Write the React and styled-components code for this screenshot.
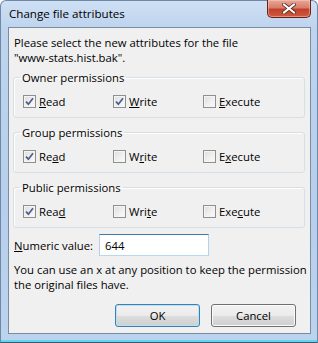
import React from "react";
import styled, { createGlobalStyle } from "styled-components";

const GlobalStyle = createGlobalStyle`
  body {
    margin: 0;
    background: #fff;
  }
  * {
    box-sizing: border-box;
  }
`;

const Window = styled.div`
  width: 318px;
  height: 343px;
  display: flex;
  flex-direction: column;
  padding: 0 6px 8px 7px;
  border: 1px solid #6f88a6;
  border-bottom-color: #3a5670;
  border-radius: 6px 6px 0 0;
  background: linear-gradient(to bottom, #cfe0f4 0px, #bed4ee 26px, #b7cfec 60%, #bcd3ee 100%);
  box-shadow: inset 0 -2px 0 #5fd6f4;
  font-family: "Open Sans", "Liberation Sans", sans-serif;
  font-size: 11.3px;
  color: #000;
`;

const TitleBar = styled.div`
  height: 26px;
  display: flex;
  align-items: flex-start;
  flex-shrink: 0;
`;

const Title = styled.div`
  line-height: 26px;
  padding-left: 1px;
  font-size: 11.6px;
`;

const CloseButton = styled.div`
  margin-left: auto;
  margin-top: -1px;
  width: 44px;
  height: 18px;
  display: flex;
  align-items: center;
  justify-content: center;
  border: 1px solid #6c2118;
  border-top: none;
  border-radius: 0 0 5px 5px;
  background: linear-gradient(to bottom, #e8a898 0%, #d87e6a 45%, #c1412b 55%, #cf5a3f 100%);
  box-shadow: inset 0 0 0 1px rgba(255, 210, 200, 0.45);
`;

const Client = styled.div`
  flex: 1;
  min-height: 0;
  display: flex;
  flex-direction: column;
  padding: 7px 5px 5px 4px;
  background: #f0f0f0;
  border: 1px solid #7b8ba0;
  line-height: 15px;
`;

const Text = styled.div`
  padding-left: 1px;
  white-space: nowrap;
  margin-top: ${(p) => p.$gap || 0}px;
`;

const Group = styled.fieldset`
  margin: ${(p) => p.$gap}px 0 0 0;
  padding: 9px 6px 8px 9px;
  border: 1px solid #d5dfe5;
  border-radius: 3px;
  min-inline-size: 0;
  box-shadow: inset 1px 1px 0 #fff;
`;

const Legend = styled.legend`
  padding: 0 2px;
  margin-left: -3px;
  line-height: 15px;
`;

const Row = styled.div`
  display: grid;
  grid-template-columns: 90px 90px 1fr;
  height: 15px;
`;

const Option = styled.label`
  display: flex;
  align-items: center;
  gap: 3px;
`;

const Box = styled.span`
  width: 13px;
  height: 13px;
  flex-shrink: 0;
  border: 1px solid #8e8f8f;
  background: linear-gradient(135deg, #dcdcdc 0%, #eeeeee 50%, #fbfbfb 100%);
  box-shadow: inset 0 0 0 1px #f4f4f4;
  display: flex;
  align-items: center;
  justify-content: center;
`;

const FieldRow = styled.div`
  display: flex;
  align-items: center;
  gap: 6px;
  margin-top: 6px;
  padding-left: 1px;
`;

const Input = styled.input`
  width: 110px;
  height: 22px;
  padding: 0 5px;
  border: 1px solid #b5cfe7;
  border-top-color: #3d7bad;
  border-bottom-color: #b7d9ed;
  background: #fff;
  font: inherit;
  color: #000;
  outline: none;
`;

const Buttons = styled.div`
  display: flex;
  justify-content: flex-end;
  gap: 11px;
  margin-top: 12px;
  padding-right: 9px;
`;

const Button = styled.div`
  width: 85px;
  height: 23px;
  display: flex;
  align-items: center;
  justify-content: center;
  border-radius: 3px;
  border: 1px solid ${(p) => (p.$default ? "#3c7fb1" : "#707070")};
  background: linear-gradient(to bottom, #f2f2f2 0%, #ebebeb 50%, #dddddd 51%, #cfcfcf 100%);
  box-shadow: inset 0 0 0 1px ${(p) => (p.$default ? "#b6e2f8" : "#fbfbfb")};
`;

const Check = ({ checked, children }) => (
  <Option>
    <Box>
      {checked && (
        <svg width="9" height="9" viewBox="0 0 9 9">
          <path d="M1 4.6 L3.4 7.2 L8 1.3" fill="none" stroke="#4a5f8c" strokeWidth="1.7" />
        </svg>
      )}
    </Box>
    <span>{children}</span>
  </Option>
);

const groups = [
  {
    title: "Owner permissions",
    items: [
      [true, <><u>R</u>ead</>],
      [true, <><u>W</u>rite</>],
      [false, <><u>E</u>xecute</>],
    ],
  },
  {
    title: "Group permissions",
    items: [
      [true, <>Re<u>a</u>d</>],
      [false, <>W<u>r</u>ite</>],
      [false, <>E<u>x</u>ecute</>],
    ],
  },
  {
    title: "Public permissions",
    items: [
      [true, <>Rea<u>d</u></>],
      [false, <>Wri<u>t</u>e</>],
      [false, <>Exe<u>c</u>ute</>],
    ],
  },
];

export default function App() {
  return (
    <>
      <GlobalStyle />
      <Window>
        <TitleBar>
          <Title>Change file attributes</Title>
          <CloseButton>
            <svg width="14" height="11" viewBox="0 0 14 11">
              <path d="M2 1.5 L12 9.5 M12 1.5 L2 9.5" stroke="#5a2a24" strokeWidth="3.6" strokeLinecap="square" />
              <path d="M2 1.5 L12 9.5 M12 1.5 L2 9.5" stroke="#fff" strokeWidth="2" strokeLinecap="square" />
            </svg>
          </CloseButton>
        </TitleBar>
        <Client>
          <Text>
            Please select the new attributes for the file
            <br />
            "www-stats.hist.bak".
          </Text>
          {groups.map((g, i) => (
            <Group key={g.title} $gap={i === 0 ? 5 : 7}>
              <Legend>{g.title}</Legend>
              <Row>
                {g.items.map(([checked, label], j) => (
                  <Check key={j} checked={checked}>
                    {label}
                  </Check>
                ))}
              </Row>
            </Group>
          ))}
          <FieldRow>
            <span>
              <u>N</u>umeric value:
            </span>
            <Input readOnly value="644" />
          </FieldRow>
          <Text $gap={6}>
            You can use an x at any position to keep the permission
            <br />
            the original files have.
          </Text>
          <Buttons>
            <Button $default>OK</Button>
            <Button>Cancel</Button>
          </Buttons>
        </Client>
      </Window>
    </>
  );
}
